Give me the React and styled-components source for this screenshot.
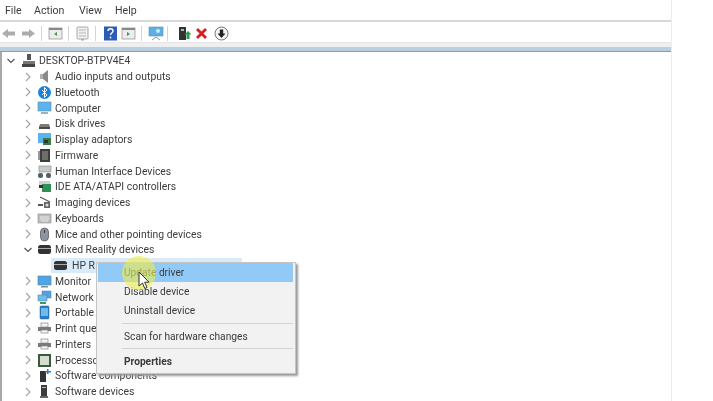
import React from "react";
import styled, { createGlobalStyle } from "styled-components";

const Global = createGlobalStyle`
  html, body { margin: 0; padding: 0; background: #fff; overflow: hidden; }
  body { font-family: Roboto, "Noto Sans", sans-serif; color: #3c3c3c; }
`;

const Stage = styled.div`
  position: relative;
  width: 713px;
  height: 401px;
  overflow: hidden;
  background: #fff;
  filter: blur(0.4px);
`;
const Win = styled.div`
  width: 672px;
  height: 401px;
  display: flex;
  flex-direction: column;
  border-right: 1px solid #ececee;
  box-sizing: border-box;
`;
const MenuBar = styled.div`
  height: 19px;
  padding-top: 1px;
  flex: none;
  display: flex;
  align-items: center;
  border-bottom: 2px solid #d8d8d6;
  font-size: 10.6px;
`;
const MenuLabel = styled.span`
  width: ${p => p.$w}px;
  padding-left: ${p => p.$pl || 0}px;
`;
const Toolbar = styled.div`
  height: 18px;
  padding-top: 2px;
  flex: none;
  display: flex;
  align-items: center;
`;
const Slot = styled.span`
  display: flex;
  margin-left: ${p => p.$ml}px;
`;
const Sep = styled.span`
  width: 1px;
  height: 15px;
  background: #d4d4d4;
  margin-left: ${p => p.$ml}px;
`;
const Band = styled.div`
  height: 4px;
  flex: none;
  background: #edf0ee;
  border-top: 1px solid #e8e4e6;
`;
const BlueBand = styled.div`
  height: 4px;
  flex: none;
  background: #b9cfe2;
  border-bottom: 1px solid #8e9aa6;
`;
const Tree = styled.div`
  flex: 1;
  padding-top: 1px;
  border-left: 2px solid #a8a8a8;
  overflow: hidden;
  font-size: 10.4px;
`;
const Row = styled.div`
  height: 15.75px;
  display: flex;
  align-items: center;
  white-space: nowrap;
  padding-left: ${p => p.$pl}px;
  line-height: 15px;
`;
const Chevron = styled.span`
  width: 10px;
  height: 10px;
  margin-right: ${p => p.$mr}px;
  display: flex;
  flex: none;
`;
const IconBox = styled.span`
  width: 15px;
  height: 15px;
  margin-right: ${p => p.$mr}px;
  display: flex;
  flex: none;
`;
const Selected = styled.span`
  display: flex;
  align-items: center;
  width: 191px;
  height: 15px;
  padding-left: 2px;
  box-sizing: border-box;
  background: #d9eaf9;
`;
const Menu = styled.div`
  position: absolute;
  left: 96px;
  top: 262px;
  width: 200px;
  height: 112px;
  box-sizing: border-box;
  padding: 0 2px 0 1px;
  background: #f2f2f2;
  border: 1px solid #c4c4c4;
  box-shadow: 2px 2px 2px #9a9a9a;
  font-size: 10.2px;
  color: #3a3a3a;
`;
const Item = styled.div`
  height: ${p => p.$h || 19}px;
  display: flex;
  align-items: center;
  padding-left: 26px;
  background: ${p => (p.$active ? "#91c9f7" : "transparent")};
  font-weight: ${p => (p.$bold ? 700 : 400)};
`;
const MenuSep = styled.div`
  height: 1px;
  margin: ${p => p.$m};
  margin-left: 24px;
  background: #d2d2d2;
`;
const Halo = styled.div`
  position: absolute;
  left: 122px;
  top: 256px;
  width: 34px;
  height: 34px;
  border-radius: 50%;
  background: rgba(238, 238, 80, 0.62);
`;
const Pointer = styled.svg`
  position: absolute;
  left: 138px;
  top: 271px;
`;

const Svg = ({ children, w = 15, h = 15 }) => (
  <svg width={w} height={h} viewBox={`0 0 ${w} ${h}`}>{children}</svg>
);

const icons = {
  root: <Svg><rect x="6" y="1" width="4" height="6" fill="#555"/><rect x="2" y="8" width="12" height="3" fill="#777"/><rect x="1" y="11" width="13" height="3" fill="#444"/></Svg>,
  audio: <Svg><rect x="3" y="5" width="3" height="5" fill="#b0b0b0"/><path d="M6 5l5-4v13l-5-4z" fill="#8a8a8a"/></Svg>,
  bt: <Svg><circle cx="7.500" cy="7.500" r="6.500" fill="#1b82dc"/><path d="M5 5l5 5-2.500 2.500v-10L10 5l-5 5" stroke="#fff" fill="none" strokeWidth="1"/></Svg>,
  computer: <Svg><rect x="1" y="1" width="13" height="9" fill="#5cb4ee" stroke="#6a8aa0" strokeWidth=".6"/><rect x="4" y="11" width="7" height="2" fill="#9db0bc"/></Svg>,
  disk: <Svg><path d="M3 8h9l1 3v2H2v-2z" fill="#7b7b7b"/><rect x="2" y="11" width="11" height="2" fill="#4a4a4a"/></Svg>,
  display: <Svg><rect x="1" y="1" width="13" height="10" fill="#5cb4ee"/><rect x="6" y="6" width="8" height="7" fill="#3f7a46"/><rect x="7" y="8" width="4" height="3" fill="#1f3f24"/></Svg>,
  firmware: <Svg><rect x="3" y="1" width="10" height="13" fill="#3e3e3e"/><rect x="5" y="3" width="6" height="9" fill="#6e6e68"/><rect x="1" y="3" width="2" height="9" fill="#999"/></Svg>,
  hid: <Svg><rect x="2" y="2" width="12" height="6" fill="#c8c8c8" stroke="#888" strokeWidth=".6"/><rect x="1" y="9" width="5" height="5" rx="2" fill="#50606c"/><rect x="9" y="9" width="5" height="5" rx="2" fill="#50606c"/></Svg>,
  ide: <Svg><rect x="2" y="2" width="11" height="4" fill="#d0d0d0"/><rect x="5" y="5" width="9" height="8" fill="#2f8f55"/><rect x="2" y="6" width="4" height="3" fill="#333"/></Svg>,
  img: <Svg><path d="M3 2l10 5" stroke="#555" strokeWidth="1.2"/><rect x="1" y="9" width="5" height="2" fill="#555"/><rect x="7" y="7" width="6" height="6" fill="#666"/><circle cx="10" cy="10" r="1.500" fill="#ddd"/></Svg>,
  kb: <Svg><rect x="1" y="3" width="13" height="9" fill="#bdbdbd" stroke="#8c8c8c" strokeWidth=".6"/><path d="M3 6h9M3 8h9M4 10h7" stroke="#e8e8e8"/></Svg>,
  mouse: <Svg><rect x="3.500" y="1" width="8" height="13" rx="4" fill="#8b94a0" stroke="#5a6068" strokeWidth=".8"/><rect x="7" y="3" width="1" height="3" fill="#333"/></Svg>,
  mixed: <Svg><rect x="1" y="3" width="13" height="9" rx="2.500" fill="#333"/><rect x="1" y="6" width="13" height="1" fill="#aaa"/></Svg>,
  monitor: <Svg><rect x="1" y="2" width="13" height="9" fill="#4aa6ea" stroke="#61788a" strokeWidth=".6"/><rect x="4" y="12" width="7" height="1.500" fill="#7b8b98"/></Svg>,
  network: <Svg><rect x="5" y="1" width="9" height="7" fill="#4aa6ea" stroke="#678" strokeWidth=".5"/><rect x="1" y="5" width="9" height="6" fill="#6cbcf0" stroke="#678" strokeWidth=".5"/><rect x="3" y="12" width="6" height="2" fill="#3f9a55"/></Svg>,
  portable: <Svg><rect x="3" y="1" width="9" height="13" rx="1" fill="#1f7fd4" stroke="#555" strokeWidth=".5"/><rect x="4" y="3" width="7" height="8" fill="#6cbcf0"/></Svg>,
  printer: <Svg><rect x="4" y="2" width="7" height="4" fill="#f4f4f4" stroke="#777" strokeWidth=".6"/><rect x="1" y="6" width="13" height="4" fill="#7a7a7a"/><rect x="4" y="9" width="7" height="3" fill="#f4f4f4" stroke="#777" strokeWidth=".6"/></Svg>,
  cpu: <Svg><rect x="1" y="1" width="13" height="13" fill="#3a5a3e"/><rect x="3" y="3" width="9" height="9" fill="#d6ddd0"/></Svg>,
  swc: <Svg><rect x="3" y="3" width="6" height="11" fill="#333"/><rect x="10" y="1" width="1.500" height="5" fill="#1f7fd4"/><rect x="8" y="3" width="6" height="1.500" fill="#1f7fd4"/></Svg>,
  swd: <Svg><rect x="4" y="1" width="6" height="11" fill="#3c3c3c"/><rect x="5" y="3" width="4" height="1" fill="#bbb"/><rect x="3" y="12" width="8" height="2" fill="#666"/></Svg>,
};

const rows = [
  ["audio", "Audio inputs and outputs"], ["bt", "Bluetooth"], ["computer", "Computer"],
  ["disk", "Disk drives"], ["display", "Display adaptors"], ["firmware", "Firmware"],
  ["hid", "Human Interface Devices"], ["ide", "IDE ATA/ATAPI controllers"], ["img", "Imaging devices"],
  ["kb", "Keyboards"], ["mouse", "Mice and other pointing devices"],
];
const rowsAfter = [
  ["monitor", "Monitor"], ["network", "Network"], ["portable", "Portable"],
  ["printer", "Print queues"], ["printer", "Printers"], ["cpu", "Processors"],
  ["swc", "Software components"], ["swd", "Software devices"],
];

const Chev = ({ open }) => (
  <svg width="10" height="10" viewBox="0 0 10 10">
    <path d={open ? "M1.500 3l3.500 3.500L8.500 3" : "M3 1l4 4-4 4"} fill="none" stroke={open ? "#555" : "#a6a6a6"} strokeWidth="1.2"/>
  </svg>
);

const Item1 = ({ kind, label }) => (
  <Row $pl={21}>
    <Chevron $mr={4}><Chev /></Chevron>
    <IconBox $mr={3}>{icons[kind]}</IconBox>
    {label}
  </Row>
);

export default function App() {
  return (
    <Stage>
      <Global />
      <Win>
        <MenuBar>
          <MenuLabel $pl={5} $w={29}>File</MenuLabel>
          <MenuLabel $w={45}>Action</MenuLabel>
          <MenuLabel $w={36}>View</MenuLabel>
          <MenuLabel $w={30}>Help</MenuLabel>
        </MenuBar>
        <Toolbar>
          <Slot $ml={1}><Svg><path d="M1 7.500L7 3v2.500h7v4H7V12z" fill="#adadad"/></Svg></Slot>
          <Slot $ml={5}><Svg><path d="M14 7.500L8 3v2.500H1v4h7V12z" fill="#adadad"/></Svg></Slot>
          <Sep $ml={5} />
          <Slot $ml={6}><Svg><rect x="1" y="2" width="13" height="11" fill="#ededed" stroke="#999" strokeWidth=".8"/><rect x="1" y="2" width="13" height="2" fill="#888"/><path d="M9 6v4L6 8z" fill="#3a9a55"/></Svg></Slot>
          <Sep $ml={5} />
          <Slot $ml={6}><Svg><rect x="2" y="1" width="11" height="12" rx="1" fill="#f0f0f0" stroke="#aaa"/><path d="M4 4h7M4 7h7M4 10h7" stroke="#bbb"/><rect x="6" y="13" width="3" height="1.500" fill="#7fb5e0"/></Svg></Slot>
          <Sep $ml={5} />
          <Slot $ml={7}><Svg><rect x="1" y="0.500" width="13" height="14" fill="#2a5cb8"/><path d="M5 5c0-3 5-3 5 0 0 2-2.500 2-2.500 4M7.500 10.500v2" stroke="#fff" fill="none" strokeWidth="1.4"/></Svg></Slot>
          <Slot $ml={3}><Svg><rect x="1" y="2" width="13" height="11" fill="#ededed" stroke="#999" strokeWidth=".8"/><rect x="1" y="2" width="13" height="2" fill="#888"/><path d="M6 6v4l3-2z" fill="#3a9a55"/></Svg></Slot>
          <Sep $ml={5} />
          <Slot $ml={6}><Svg w={16}><rect x="1" y="1" width="14" height="9" fill="#5cb0ea" stroke="#6a8aa0" strokeWidth=".6"/><path d="M4 14l4-3 4 3" stroke="#8a9aa6" fill="none"/><circle cx="10" cy="5" r="2" fill="#cfe8fa"/></Svg></Slot>
          <Sep $ml={3} />
          <Slot $ml={9}><Svg><rect x="2" y="1" width="7" height="13" fill="#333"/><rect x="4" y="3" width="3" height="2" fill="#8ad08a"/><path d="M11 5l3.500 3.500H12.500V13h-3V8.500H7.500z" fill="#2f9a4f"/></Svg></Slot>
          <Slot $ml={3}><Svg w={13}><path d="M2 3l9 9M11 3l-9 9" stroke="#d81e1e" strokeWidth="2.8"/></Svg></Slot>
          <Slot $ml={6}><Svg><circle cx="7.500" cy="7.500" r="6.500" fill="#f6f6f6" stroke="#777"/><path d="M5.800 3.500h3.400v4H11.500l-4 4.500-4-4.500h2.300z" fill="#222"/></Svg></Slot>
        </Toolbar>
        <Band />
        <BlueBand />
        <Tree>
          <Row $pl={4}>
            <Chevron $mr={5}><Chev open /></Chevron>
            <IconBox $mr={3}>{icons.root}</IconBox>
            DESKTOP-BTPV4E4
          </Row>
          {rows.map(([k, l]) => <Item1 key={l} kind={k} label={l} />)}
          <Row $pl={21}>
            <Chevron $mr={4}><Chev open /></Chevron>
            <IconBox $mr={3}>{icons.mixed}</IconBox>
            Mixed Reality devices
          </Row>
          <Row $pl={49}>
            <Selected>
              <IconBox $mr={4}>{icons.mixed}</IconBox>
              HP R
            </Selected>
          </Row>
          {rowsAfter.map(([k, l]) => <Item1 key={l + k} kind={k} label={l} />)}
        </Tree>
      </Win>
      <Menu>
        <Item $active>Update driver</Item>
        <Item>Disable device</Item>
        <Item>Uninstall device</Item>
        <MenuSep $m="3px 0 4px" />
        <Item $h={16}>Scan for hardware changes</Item>
        <MenuSep $m="4px 0 4px" />
        <Item $h={16} $bold>Properties</Item>
      </Menu>
      <Halo />
      <Pointer width="12" height="19" viewBox="0 0 12 19">
        <path d="M1 1v14l3.500-3 2.300 5.500 2.200-1-2.300-5.300h4.300z" fill="#fff" stroke="#333" strokeWidth="1"/>
      </Pointer>
    </Stage>
  );
}
